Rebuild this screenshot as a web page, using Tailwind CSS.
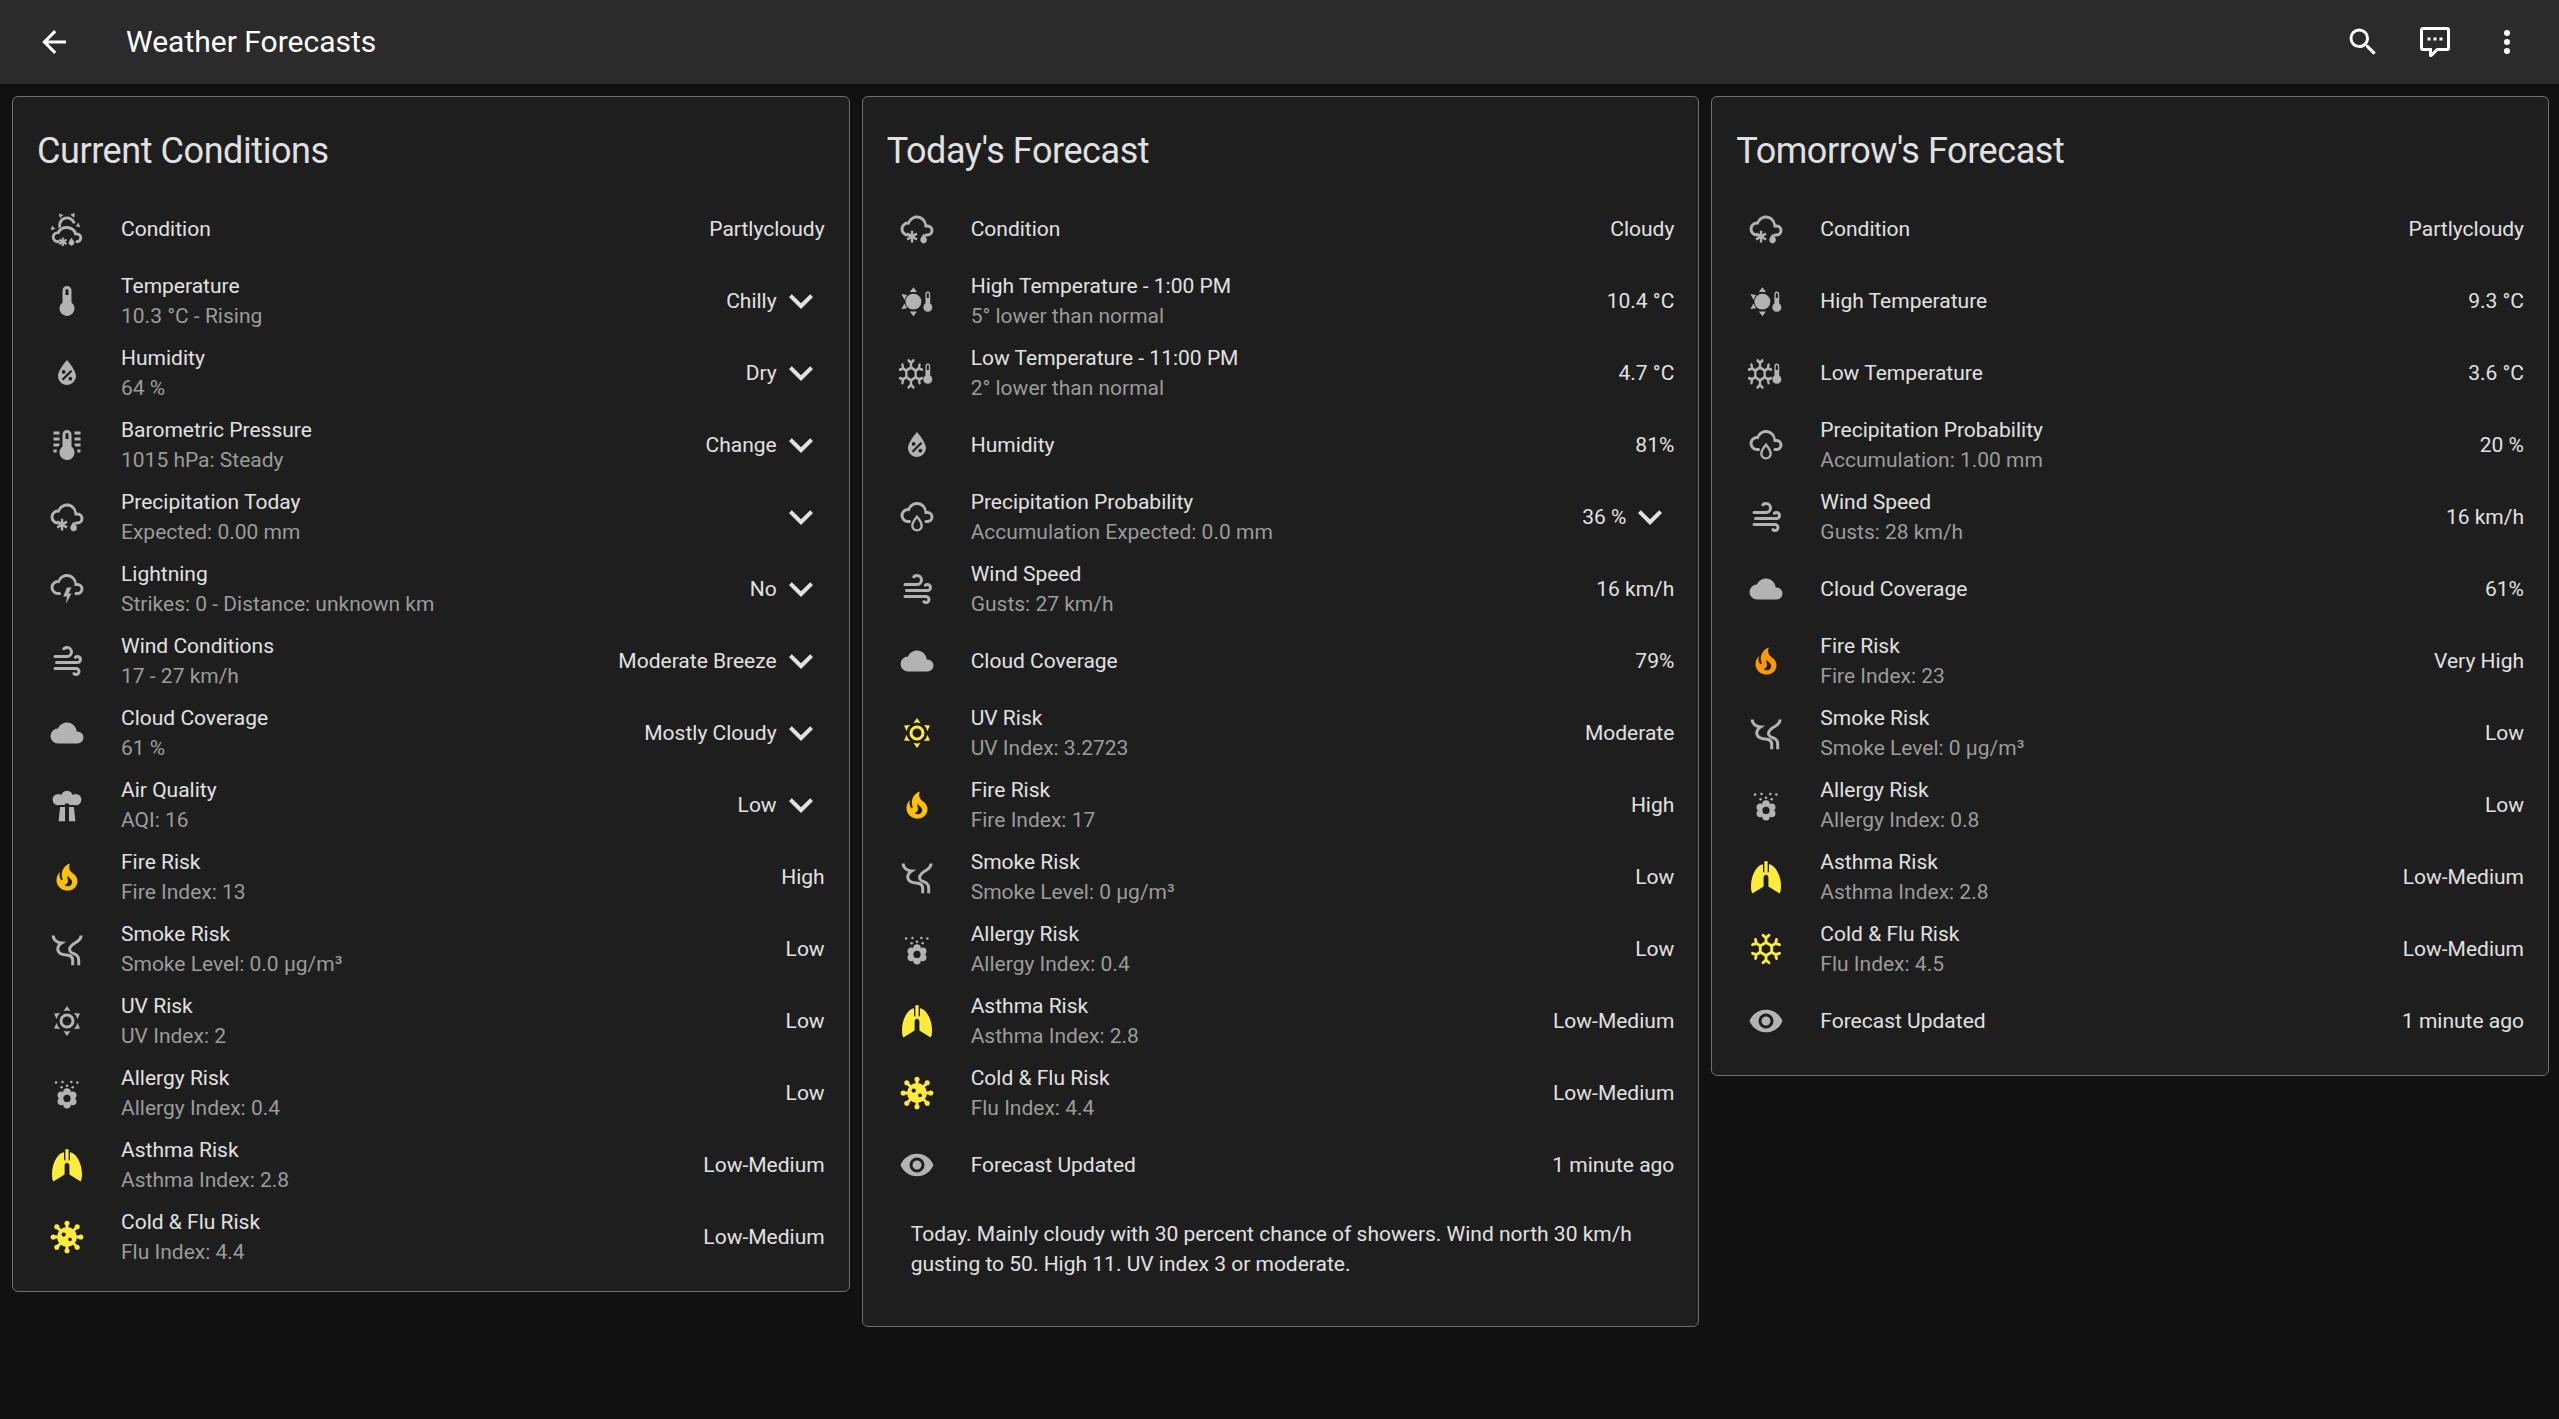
<!DOCTYPE html>
<html lang="en">
<head>
<meta charset="utf-8">
<title>Weather Forecasts</title>
<script src="https://cdn.jsdelivr.net/npm/@tailwindcss/browser@4"></script>
</head>
<body class="bg-[#111111] font-['Roboto',sans-serif] text-[21px] leading-[30px] text-[#e1e1e1]">
<svg class="absolute w-0 h-0" aria-hidden="true">
<defs>
<g id="cloud-line" fill="currentColor"><path d="M6,16A5,5 0 0,1 1,11A5,5 0 0,1 6,6C7,3.65 9.3,2 12,2C15.43,2 18.24,4.66 18.5,8.03L19,8A4,4 0 0,1 23,12A4,4 0 0,1 19,16H18A1,1 0 0,1 17,15A1,1 0 0,1 18,14H19A2,2 0 0,0 21,12A2,2 0 0,0 19,10H17V9A5,5 0 0,0 12,4C9.5,4 7.45,5.82 7.06,8.19C6.73,8.07 6.37,8 6,8A3,3 0 0,0 3,11A3,3 0 0,0 6,14H7A1,1 0 0,1 8,15A1,1 0 0,1 7,16H6Z"/></g>
<g id="snowy-rainy">
<use href="#cloud-line" transform="translate(0 1)"/>
<path fill="currentColor" d="M18.6,19.2C18.6,20.5 17.6,21.6 16.4,21.6C15.2,21.6 14.2,20.5 14.2,19.2C14.2,17.7 16.4,15.1 16.4,15.1C16.4,15.1 18.6,17.7 18.6,19.2Z"/>
<g stroke="currentColor" stroke-width="1.6" stroke-linecap="butt"><path d="M8.7 13.2V21M5.4 15.1L12 19M5.4 19L12 15.1"/></g>
</g>
<g id="partly-snowy-rainy">
<path fill="none" stroke="currentColor" stroke-width="1.9" d="M7.2 11A5 5 0 0 1 16.9 8.3"/>
<path fill="none" stroke="currentColor" stroke-width="1.9" stroke-linecap="round" d="M6.2 20.5C3.9 20.5 2.8 19 2.8 17.4C2.8 15.7 4.2 14.4 6.2 14.4C7.2 12.1 9.5 11 12 11C15 11 17.3 13 17.7 15.3C20 15.1 21.2 16.3 21.2 17.9C21.2 19.5 20 20.5 18.6 20.5"/>
<path fill="currentColor" d="M6.6 1.6L9.6 2.6L7.2 4.6ZM14.2 2.4L17.2 1.4L16.8 4.6ZM1.2 12.8L2 9.6L4.2 12ZM19.6 7.6L20.8 10.8L17.8 10.2Z"/>
<g stroke="currentColor" stroke-width="1.4"><path d="M9.2 17.6V23.4M6.7 19.1L11.7 22M6.7 22L11.7 19.1"/></g>
<path fill="currentColor" d="M16.9,21.2C16.9,22.2 16,23.1 15,23.1C14,23.1 13.1,22.2 13.1,21.2C13.1,20 15,17.8 15,17.8C15,17.8 16.9,20 16.9,21.2Z"/>
</g>
<path id="thermometer" fill="currentColor" d="M15 13V5A3 3 0 0 0 9 5V13A5 5 0 1 0 15 13M12 4A1 1 0 0 1 13 5V8H11V5A1 1 0 0 1 12 4Z"/>
<path id="water-percent" fill="currentColor" d="M12,3.25C12,3.25 6,10 6,14C6,17.32 8.69,20 12,20A6,6 0 0,0 18,14C18,10 12,3.25 12,3.25M14.47,9.97L15.53,11.03L9.53,17.03L8.47,15.97M9.75,10A1.25,1.25 0 0,1 11,11.25A1.25,1.25 0 0,1 9.75,12.5A1.25,1.25 0 0,1 8.5,11.25A1.25,1.25 0 0,1 9.75,10M14.25,14.5A1.25,1.25 0 0,1 15.5,15.75A1.25,1.25 0 0,1 14.25,17A1.25,1.25 0 0,1 13,15.75A1.25,1.25 0 0,1 14.25,14.5Z"/>
<path id="thermometer-lines" fill="currentColor" d="M17 3H21V5H17V3M17 7H21V9H17V7M17 11H21V13H17.75L17 12.1V11M21 15V17H19C19 16.31 18.9 15.63 18.71 15H21M7 3V5H3V3H7M7 7V9H3V7H7M7 11V12.1L6.25 13H3V11H7M3 15H5.29C5.1 15.63 5 16.31 5 17H3V15M15 13V5C15 3.34 13.66 2 12 2S9 3.34 9 5V13C6.79 14.66 6.34 17.79 8 20S12.79 22.66 15 21 17.66 16.21 16 14C15.72 13.62 15.38 13.28 15 13M12 4C12.55 4 13 4.45 13 5V8H11V5C11 4.45 11.45 4 12 4Z"/>
<path id="lightning" fill="currentColor" d="M6,16A5,5 0 0,1 1,11A5,5 0 0,1 6,6C7,3.65 9.3,2 12,2C15.43,2 18.24,4.66 18.5,8.03L19,8A4,4 0 0,1 23,12A4,4 0 0,1 19,16H18A1,1 0 0,1 17,15A1,1 0 0,1 18,14H19A2,2 0 0,0 21,12A2,2 0 0,0 19,10H17V9A5,5 0 0,0 12,4C9.5,4 7.45,5.82 7.06,8.19C6.73,8.07 6.37,8 6,8A3,3 0 0,0 3,11A3,3 0 0,0 6,14H7A1,1 0 0,1 8,15A1,1 0 0,1 7,16H6M12,11H15L13,15H15L11.25,22L12,17H9.5L12,11Z"/>
<path id="windy" fill="currentColor" d="M4,10A1,1 0 0,1 3,9A1,1 0 0,1 4,8H12A2,2 0 0,0 14,6A2,2 0 0,0 12,4C11.45,4 10.95,4.22 10.59,4.59C10.2,5 9.56,5 9.17,4.59C8.78,4.2 8.78,3.56 9.17,3.17C9.89,2.45 10.89,2 12,2A4,4 0 0,1 16,6A4,4 0 0,1 12,10H4M19,12A1,1 0 0,0 20,11A1,1 0 0,0 19,10C18.72,10 18.47,10.11 18.29,10.29C17.9,10.68 17.27,10.68 16.88,10.29C16.5,9.9 16.5,9.27 16.88,8.88C17.42,8.34 18.17,8 19,8A3,3 0 0,1 22,11A3,3 0 0,1 19,14H5A1,1 0 0,1 4,13A1,1 0 0,1 5,12H19M18,18H4A1,1 0 0,1 3,17A1,1 0 0,1 4,16H18A3,3 0 0,1 21,19A3,3 0 0,1 18,22C17.17,22 16.42,21.66 15.88,21.12C15.5,20.73 15.5,20.1 15.88,19.71C16.27,19.32 16.9,19.32 17.29,19.71C17.47,19.89 17.72,20 18,20A1,1 0 0,0 19,19A1,1 0 0,0 18,18Z"/>
<path id="cloudy" fill="currentColor" d="M6,19A5,5 0 0,1 1,14A5,5 0 0,1 6,9C7,6.65 9.3,5 12,5C15.43,5 18.24,7.66 18.5,11.03L19,11A4,4 0 0,1 23,15A4,4 0 0,1 19,19H6Z"/>
<g id="air" fill="currentColor">
<circle cx="12" cy="6.4" r="3.9"/><circle cx="6.2" cy="8.4" r="3.8"/><circle cx="17.8" cy="8.4" r="3.8"/>
<path d="M7 8H17V12H13.4V11H10.6V12H7Z"/>
<path d="M7.4 13.4H10.7V22.8H6.4ZM13.3 13.4H16.6L17.6 22.8H13.3Z"/>
</g>
<path id="fire" fill="currentColor" d="M17.66 11.2C17.43 10.9 17.15 10.64 16.89 10.38C16.22 9.78 15.46 9.35 14.82 8.72C13.33 7.26 13 4.85 13.95 3C13 3.23 12.17 3.75 11.46 4.32C8.87 6.4 7.85 10.07 9.07 13.22C9.11 13.32 9.15 13.42 9.15 13.55C9.15 13.77 9 13.97 8.8 14.05C8.57 14.15 8.33 14.09 8.14 13.93C8.08 13.88 8.04 13.83 8 13.76C6.87 12.33 6.69 10.28 7.45 8.64C5.78 10 4.87 12.3 5 14.47C5.06 14.97 5.12 15.47 5.29 15.97C5.43 16.57 5.7 17.17 6 17.7C7.08 19.43 8.95 20.67 10.96 20.92C13.1 21.19 15.39 20.8 17.03 19.32C18.86 17.66 19.5 15 18.56 12.72L18.43 12.46C18.22 12 17.66 11.2 17.66 11.2M14.5 17.5C14.22 17.74 13.76 18 13.4 18.1C12.28 18.5 11.16 17.94 10.5 17.28C11.69 17 12.4 16.12 12.61 15.23C12.78 14.43 12.46 13.77 12.33 13C12.21 12.26 12.23 11.63 12.5 10.94C12.69 11.32 12.89 11.7 13.13 12C13.9 13 15.11 13.44 15.37 14.8C15.41 14.94 15.43 15.08 15.43 15.23C15.46 16.05 15.1 16.95 14.5 17.5H14.5Z"/>
<g id="smoke" fill="none" stroke="currentColor" stroke-width="2">
<path d="M2.8 3C2.8 6 5.5 7.8 8.4 8C6 9.5 5 12 6.5 14C8 16.3 11 15.8 13.5 16.3C15 16.7 15.8 17.5 15.8 19.5V22.8"/>
<path d="M21.4 3C21.4 6 19 7 17 8.2C14.5 9.8 13 11.5 14 13.5C15 15 17 15 18.5 16.2C19.5 17 19.8 18 19.8 19.5V22.8"/>
</g>
<path id="sunny" fill="currentColor" d="M12,7A5,5 0 0,1 17,12A5,5 0 0,1 12,17A5,5 0 0,1 7,12A5,5 0 0,1 12,7M12,9A3,3 0 0,0 9,12A3,3 0 0,0 12,15A3,3 0 0,0 15,12A3,3 0 0,0 12,9M12,2L14.39,5.42C13.65,5.15 12.84,5 12,5C11.16,5 10.35,5.15 9.61,5.42L12,2M3.34,7L7.5,6.65C6.9,7.16 6.36,7.78 5.94,8.5C5.5,9.24 5.25,10 5.11,10.79L3.34,7M3.36,17L5.12,13.23C5.26,14 5.53,14.78 5.95,15.5C6.37,16.24 6.91,16.86 7.5,17.37L3.36,17M20.65,7L18.88,10.79C18.74,10 18.47,9.23 18.05,8.5C17.63,7.78 17.1,7.15 16.5,6.64L20.65,7M20.64,17L16.5,17.36C17.09,16.85 17.62,16.22 18.04,15.5C18.46,14.77 18.73,14 18.87,13.21L20.64,17M12,22.01L9.59,18.57C10.33,18.84 11.14,19 12,19C12.82,19 13.63,18.84 14.37,18.57L12,22.01Z"/>
<g id="pollen" fill="currentColor">
<circle cx="12" cy="11.4" r="2.5"/><circle cx="12" cy="19.8" r="2.5"/><circle cx="8.2" cy="13.5" r="2.5"/><circle cx="15.8" cy="13.5" r="2.5"/><circle cx="8.2" cy="17.7" r="2.5"/><circle cx="15.8" cy="17.7" r="2.5"/>
<circle cx="12" cy="15.6" r="4"/>
<circle cx="12" cy="15.6" r="2.4" fill="#1e1e1e"/>
<circle cx="4.7" cy="5" r=".85"/><circle cx="9" cy="4.7" r=".85"/><circle cx="14.9" cy="4.7" r=".85"/><circle cx="18.9" cy="5" r=".85"/><circle cx="8.4" cy="8.2" r=".85"/><circle cx="12" cy="7.2" r=".85"/><circle cx="15.8" cy="8.2" r=".85"/>
</g>
<g id="lungs" fill="currentColor">
<path d="M10 3.5C7 3.5 2 9.5 2 18C2 20 2.2 22 2.9 23L10.4 18.4V11.8L11.8 10V9.5L10 8.6Z"/>
<path d="M14 3.5C17 3.5 22 9.5 22 18C22 20 21.8 22 21.1 23L13.6 18.4V11.8L12.2 10V9.5L14 8.6Z"/>
<rect x="10.9" y="1.5" width="2.2" height="9"/>
</g>
<g id="virus" fill="currentColor">
<g stroke="currentColor" stroke-width="1.9" stroke-linecap="round">
<path d="M12 12V3M12 12L18.4 5.6M12 12H21M12 12L18.4 18.4M12 12V21M12 12L5.6 18.4M12 12H3M12 12L5.6 5.6"/>
</g>
<circle cx="12" cy="2.8" r="1.7"/><circle cx="18.8" cy="5.2" r="1.7"/><circle cx="21.2" cy="12" r="1.7"/><circle cx="18.8" cy="18.8" r="1.7"/><circle cx="12" cy="21.2" r="1.7"/><circle cx="5.2" cy="18.8" r="1.7"/><circle cx="2.8" cy="12" r="1.7"/><circle cx="5.2" cy="5.2" r="1.7"/>
<circle cx="12" cy="12" r="6.6"/>
<circle cx="9.8" cy="10.4" r="1.4" fill="#1e1e1e"/><circle cx="14" cy="13.6" r="1.2" fill="#1e1e1e"/>
</g>
<g id="snow-arm" fill="none" stroke="currentColor" stroke-width="1.9" stroke-linecap="round"><path d="M12 7.6V4.4M12 4.6L10 2.8M12 4.6L14 2.8"/></g>
<g id="snowflake">
<path fill="none" stroke="currentColor" stroke-width="1.9" d="M12 7.6L15.8 9.8V14.2L12 16.4L8.2 14.2V9.8Z"/>
<use href="#snow-arm"/><use href="#snow-arm" transform="rotate(60 12 12)"/><use href="#snow-arm" transform="rotate(120 12 12)"/><use href="#snow-arm" transform="rotate(180 12 12)"/><use href="#snow-arm" transform="rotate(240 12 12)"/><use href="#snow-arm" transform="rotate(300 12 12)"/>
</g>
<path id="mini-therm" fill="currentColor" fill-rule="evenodd" d="M20.8 13.7V7.3A1.6 1.6 0 0 0 17.6 7.3V13.7A3 3 0 1 0 20.8 13.7ZM19.2 6.6A.7 .7 0 0 1 19.9 7.3V10H18.5V7.3A.7 .7 0 0 1 19.2 6.6Z"/>
<g id="sun-therm">
<circle cx="9.6" cy="12.4" r="5.3" fill="currentColor"/>
<path fill="currentColor" d="M9.6 2.8L12 6H7.2ZM9.6 22.2L7.2 19H12ZM1.6 7.4L5.4 8L3.6 11.2ZM1.6 17.4L3.6 13.6L5.4 16.8Z"/>
<use href="#mini-therm"/>
</g>
<g id="snow-therm">
<use href="#snowflake" transform="translate(8 12.6) scale(.82 .98) translate(-12 -12)"/>
<use href="#mini-therm"/>
</g>
<g id="rain-prob">
<use href="#cloud-line"/>
<path fill="none" stroke="currentColor" stroke-width="1.6" d="M12 11.8C12 11.8 8.9 15.4 8.9 17.8A3.1 3.1 0 0 0 15.1 17.8C15.1 15.4 12 11.8 12 11.8Z"/>
</g>
<path id="eye" fill="currentColor" d="M12,9A3,3 0 0,0 9,12A3,3 0 0,0 12,15A3,3 0 0,0 15,12A3,3 0 0,0 12,9M12,17A5,5 0 0,1 7,12A5,5 0 0,1 12,7A5,5 0 0,1 17,12A5,5 0 0,1 12,17M12,4.5C7,4.5 2.73,7.61 1,12C2.73,16.39 7,19.5 12,19.5C17,19.5 21.27,16.39 23,12C21.27,7.61 17,4.5 12,4.5Z"/>
<path id="chev" fill="currentColor" d="M7.41,8.58L12,13.17L16.59,8.58L18,10L12,16L6,10L7.41,8.58Z"/>
</defs>
</svg>

<header class="h-[84px] bg-[#2b2b2b] flex items-center pl-[18px] pr-4 text-white">
<button class="w-[72px] h-[72px] flex items-center justify-center"><svg viewBox="0 0 24 24" class="w-9 h-9 fill-current"><path d="M20,11V13H8L13.5,18.5L12.08,19.92L4.16,12L12.08,4.08L13.5,5.5L8,11H20Z"/></svg></button>
<h1 class="ml-[36px] flex-1 text-[30px] leading-[40px] font-normal">Weather Forecasts</h1>
<button class="w-[72px] h-[72px] flex items-center justify-center"><svg viewBox="0 0 24 24" class="w-9 h-9 fill-current"><path d="M9.5,3A6.5,6.5 0 0,1 16,9.5C16,11.11 15.41,12.59 14.44,13.73L14.71,14H15.5L20.5,19L19,20.5L14,15.5V14.71L13.73,14.44C12.59,15.41 11.11,16 9.5,16A6.5,6.5 0 0,1 3,9.5A6.5,6.5 0 0,1 9.5,3M9.5,5C7,5 5,7 5,9.5C5,12 7,14 9.5,14C12,14 14,12 14,9.5C14,7 12,5 9.5,5Z"/></svg></button>
<button class="w-[72px] h-[72px] flex items-center justify-center"><svg viewBox="0 0 24 24" class="w-9 h-9 fill-current"><path d="M9,22A1,1 0 0,1 8,21V18H4A2,2 0 0,1 2,16V4C2,2.89 2.9,2 4,2H20A2,2 0 0,1 22,4V16A2,2 0 0,1 20,18H13.9L10.2,21.71C10,21.9 9.75,22 9.5,22V22H9M10,16V19.08L13.08,16H20V4H4V16H10M17,11H15V9H17V11M13,11H11V9H13V11M9,11H7V9H9V11Z"/></svg></button>
<button class="w-[72px] h-[72px] flex items-center justify-center"><svg viewBox="0 0 24 24" class="w-9 h-9 fill-current"><path d="M12,16A2,2 0 0,1 14,18A2,2 0 0,1 12,20A2,2 0 0,1 10,18A2,2 0 0,1 12,16M12,10A2,2 0 0,1 14,12A2,2 0 0,1 12,14A2,2 0 0,1 10,12A2,2 0 0,1 12,10M12,4A2,2 0 0,1 14,6A2,2 0 0,1 12,8A2,2 0 0,1 10,6A2,2 0 0,1 12,4Z"/></svg></button>
</header>

<main class="grid grid-cols-3 gap-3 items-start pl-3 pr-[10px] pt-3 h-[1335px]">

<!-- Current -->
<section class="bg-[#1e1e1e] border border-[#6f6f6f] rounded-md px-6 pb-[18px]">
<h2 class="text-[36px] leading-[48px] tracking-[-0.012em] font-normal pt-[30px] pb-[18px]">Current Conditions</h2>
<div class="flex items-center h-[72px]"><span class="w-[60px] flex justify-center"><svg viewBox="0 0 24 24" class="w-9 h-9 text-[#b3b3b3]"><use href="#partly-snowy-rainy"/></svg></span><div class="ml-6 flex-1">Condition</div><div>Partlycloudy</div></div>
<div class="flex items-center h-[72px]"><span class="w-[60px] flex justify-center"><svg viewBox="0 0 24 24" class="w-9 h-9 text-[#b3b3b3]"><use href="#thermometer"/></svg></span><div class="ml-6 flex-1"><div>Temperature</div><div class="text-[#9b9b9b]">10.3 °C - Rising</div></div><div>Chilly</div><svg viewBox="0 0 24 24" class="w-12 h-12 text-[#e1e1e1]"><use href="#chev"/></svg></div>
<div class="flex items-center h-[72px]"><span class="w-[60px] flex justify-center"><svg viewBox="0 0 24 24" class="w-9 h-9 text-[#b3b3b3]"><use href="#water-percent"/></svg></span><div class="ml-6 flex-1"><div>Humidity</div><div class="text-[#9b9b9b]">64 %</div></div><div>Dry</div><svg viewBox="0 0 24 24" class="w-12 h-12 text-[#e1e1e1]"><use href="#chev"/></svg></div>
<div class="flex items-center h-[72px]"><span class="w-[60px] flex justify-center"><svg viewBox="0 0 24 24" class="w-9 h-9 text-[#b3b3b3]"><use href="#thermometer-lines"/></svg></span><div class="ml-6 flex-1"><div>Barometric Pressure</div><div class="text-[#9b9b9b]">1015 hPa: Steady</div></div><div>Change</div><svg viewBox="0 0 24 24" class="w-12 h-12 text-[#e1e1e1]"><use href="#chev"/></svg></div>
<div class="flex items-center h-[72px]"><span class="w-[60px] flex justify-center"><svg viewBox="0 0 24 24" class="w-9 h-9 text-[#b3b3b3]"><use href="#snowy-rainy"/></svg></span><div class="ml-6 flex-1"><div>Precipitation Today</div><div class="text-[#9b9b9b]">Expected: 0.00 mm</div></div><svg viewBox="0 0 24 24" class="w-12 h-12 text-[#e1e1e1]"><use href="#chev"/></svg></div>
<div class="flex items-center h-[72px]"><span class="w-[60px] flex justify-center"><svg viewBox="0 0 24 24" class="w-9 h-9 text-[#b3b3b3]"><use href="#lightning"/></svg></span><div class="ml-6 flex-1"><div>Lightning</div><div class="text-[#9b9b9b]">Strikes: 0 - Distance: unknown km</div></div><div>No</div><svg viewBox="0 0 24 24" class="w-12 h-12 text-[#e1e1e1]"><use href="#chev"/></svg></div>
<div class="flex items-center h-[72px]"><span class="w-[60px] flex justify-center"><svg viewBox="0 0 24 24" class="w-9 h-9 text-[#b3b3b3]"><use href="#windy"/></svg></span><div class="ml-6 flex-1"><div>Wind Conditions</div><div class="text-[#9b9b9b]">17 - 27 km/h</div></div><div>Moderate Breeze</div><svg viewBox="0 0 24 24" class="w-12 h-12 text-[#e1e1e1]"><use href="#chev"/></svg></div>
<div class="flex items-center h-[72px]"><span class="w-[60px] flex justify-center"><svg viewBox="0 0 24 24" class="w-9 h-9 text-[#b3b3b3]"><use href="#cloudy"/></svg></span><div class="ml-6 flex-1"><div>Cloud Coverage</div><div class="text-[#9b9b9b]">61 %</div></div><div>Mostly Cloudy</div><svg viewBox="0 0 24 24" class="w-12 h-12 text-[#e1e1e1]"><use href="#chev"/></svg></div>
<div class="flex items-center h-[72px]"><span class="w-[60px] flex justify-center"><svg viewBox="0 0 24 24" class="w-9 h-9 text-[#b3b3b3]"><use href="#air"/></svg></span><div class="ml-6 flex-1"><div>Air Quality</div><div class="text-[#9b9b9b]">AQI: 16</div></div><div>Low</div><svg viewBox="0 0 24 24" class="w-12 h-12 text-[#e1e1e1]"><use href="#chev"/></svg></div>
<div class="flex items-center h-[72px]"><span class="w-[60px] flex justify-center"><svg viewBox="0 0 24 24" class="w-9 h-9 text-[#ffc107]"><use href="#fire"/></svg></span><div class="ml-6 flex-1"><div>Fire Risk</div><div class="text-[#9b9b9b]">Fire Index: 13</div></div><div>High</div></div>
<div class="flex items-center h-[72px]"><span class="w-[60px] flex justify-center"><svg viewBox="0 0 24 24" class="w-9 h-9 text-[#b3b3b3]"><use href="#smoke"/></svg></span><div class="ml-6 flex-1"><div>Smoke Risk</div><div class="text-[#9b9b9b]">Smoke Level: 0.0 µg/m³</div></div><div>Low</div></div>
<div class="flex items-center h-[72px]"><span class="w-[60px] flex justify-center"><svg viewBox="0 0 24 24" class="w-9 h-9 text-[#b3b3b3]"><use href="#sunny"/></svg></span><div class="ml-6 flex-1"><div>UV Risk</div><div class="text-[#9b9b9b]">UV Index: 2</div></div><div>Low</div></div>
<div class="flex items-center h-[72px]"><span class="w-[60px] flex justify-center"><svg viewBox="0 0 24 24" class="w-9 h-9 text-[#b3b3b3]"><use href="#pollen"/></svg></span><div class="ml-6 flex-1"><div>Allergy Risk</div><div class="text-[#9b9b9b]">Allergy Index: 0.4</div></div><div>Low</div></div>
<div class="flex items-center h-[72px]"><span class="w-[60px] flex justify-center"><svg viewBox="0 0 24 24" class="w-9 h-9 text-[#ffeb3b]"><use href="#lungs"/></svg></span><div class="ml-6 flex-1"><div>Asthma Risk</div><div class="text-[#9b9b9b]">Asthma Index: 2.8</div></div><div>Low-Medium</div></div>
<div class="flex items-center h-[72px]"><span class="w-[60px] flex justify-center"><svg viewBox="0 0 24 24" class="w-9 h-9 text-[#ffeb3b]"><use href="#virus"/></svg></span><div class="ml-6 flex-1"><div>Cold &amp; Flu Risk</div><div class="text-[#9b9b9b]">Flu Index: 4.4</div></div><div>Low-Medium</div></div>
</section>

<!-- Today -->
<section class="bg-[#1e1e1e] border border-[#6f6f6f] rounded-md px-6 pb-[47px]">
<h2 class="text-[36px] leading-[48px] tracking-[-0.012em] font-normal pt-[30px] pb-[18px]">Today's Forecast</h2>
<div class="flex items-center h-[72px]"><span class="w-[60px] flex justify-center"><svg viewBox="0 0 24 24" class="w-9 h-9 text-[#b3b3b3]"><use href="#snowy-rainy"/></svg></span><div class="ml-6 flex-1">Condition</div><div>Cloudy</div></div>
<div class="flex items-center h-[72px]"><span class="w-[60px] flex justify-center"><svg viewBox="0 0 24 24" class="w-9 h-9 text-[#b3b3b3]"><use href="#sun-therm"/></svg></span><div class="ml-6 flex-1"><div>High Temperature - 1:00 PM</div><div class="text-[#9b9b9b]">5° lower than normal</div></div><div>10.4 °C</div></div>
<div class="flex items-center h-[72px]"><span class="w-[60px] flex justify-center"><svg viewBox="0 0 24 24" class="w-9 h-9 text-[#b3b3b3]"><use href="#snow-therm"/></svg></span><div class="ml-6 flex-1"><div>Low Temperature - 11:00 PM</div><div class="text-[#9b9b9b]">2° lower than normal</div></div><div>4.7 °C</div></div>
<div class="flex items-center h-[72px]"><span class="w-[60px] flex justify-center"><svg viewBox="0 0 24 24" class="w-9 h-9 text-[#b3b3b3]"><use href="#water-percent"/></svg></span><div class="ml-6 flex-1">Humidity</div><div>81%</div></div>
<div class="flex items-center h-[72px]"><span class="w-[60px] flex justify-center"><svg viewBox="0 0 24 24" class="w-9 h-9 text-[#b3b3b3]"><use href="#rain-prob"/></svg></span><div class="ml-6 flex-1"><div>Precipitation Probability</div><div class="text-[#9b9b9b]">Accumulation Expected: 0.0 mm</div></div><div>36 %</div><svg viewBox="0 0 24 24" class="w-12 h-12 text-[#e1e1e1]"><use href="#chev"/></svg></div>
<div class="flex items-center h-[72px]"><span class="w-[60px] flex justify-center"><svg viewBox="0 0 24 24" class="w-9 h-9 text-[#b3b3b3]"><use href="#windy"/></svg></span><div class="ml-6 flex-1"><div>Wind Speed</div><div class="text-[#9b9b9b]">Gusts: 27 km/h</div></div><div>16 km/h</div></div>
<div class="flex items-center h-[72px]"><span class="w-[60px] flex justify-center"><svg viewBox="0 0 24 24" class="w-9 h-9 text-[#b3b3b3]"><use href="#cloudy"/></svg></span><div class="ml-6 flex-1">Cloud Coverage</div><div>79%</div></div>
<div class="flex items-center h-[72px]"><span class="w-[60px] flex justify-center"><svg viewBox="0 0 24 24" class="w-9 h-9 text-[#ffeb3b]"><use href="#sunny"/></svg></span><div class="ml-6 flex-1"><div>UV Risk</div><div class="text-[#9b9b9b]">UV Index: 3.2723</div></div><div>Moderate</div></div>
<div class="flex items-center h-[72px]"><span class="w-[60px] flex justify-center"><svg viewBox="0 0 24 24" class="w-9 h-9 text-[#ffc107]"><use href="#fire"/></svg></span><div class="ml-6 flex-1"><div>Fire Risk</div><div class="text-[#9b9b9b]">Fire Index: 17</div></div><div>High</div></div>
<div class="flex items-center h-[72px]"><span class="w-[60px] flex justify-center"><svg viewBox="0 0 24 24" class="w-9 h-9 text-[#b3b3b3]"><use href="#smoke"/></svg></span><div class="ml-6 flex-1"><div>Smoke Risk</div><div class="text-[#9b9b9b]">Smoke Level: 0 µg/m³</div></div><div>Low</div></div>
<div class="flex items-center h-[72px]"><span class="w-[60px] flex justify-center"><svg viewBox="0 0 24 24" class="w-9 h-9 text-[#b3b3b3]"><use href="#pollen"/></svg></span><div class="ml-6 flex-1"><div>Allergy Risk</div><div class="text-[#9b9b9b]">Allergy Index: 0.4</div></div><div>Low</div></div>
<div class="flex items-center h-[72px]"><span class="w-[60px] flex justify-center"><svg viewBox="0 0 24 24" class="w-9 h-9 text-[#ffeb3b]"><use href="#lungs"/></svg></span><div class="ml-6 flex-1"><div>Asthma Risk</div><div class="text-[#9b9b9b]">Asthma Index: 2.8</div></div><div>Low-Medium</div></div>
<div class="flex items-center h-[72px]"><span class="w-[60px] flex justify-center"><svg viewBox="0 0 24 24" class="w-9 h-9 text-[#ffeb3b]"><use href="#virus"/></svg></span><div class="ml-6 flex-1"><div>Cold &amp; Flu Risk</div><div class="text-[#9b9b9b]">Flu Index: 4.4</div></div><div>Low-Medium</div></div>
<div class="flex items-center h-[72px]"><span class="w-[60px] flex justify-center"><svg viewBox="0 0 24 24" class="w-9 h-9 text-[#b3b3b3]"><use href="#eye"/></svg></span><div class="ml-6 flex-1">Forecast Updated</div><div>1 minute ago</div></div>
<p class="px-6 pt-[18px]">Today. Mainly cloudy with 30 percent chance of showers. Wind north 30 km/h gusting to 50. High 11. UV index 3 or moderate.</p>
</section>

<!-- Tomorrow -->
<section class="bg-[#1e1e1e] border border-[#6f6f6f] rounded-md px-6 pb-[18px]">
<h2 class="text-[36px] leading-[48px] tracking-[-0.012em] font-normal pt-[30px] pb-[18px]">Tomorrow's Forecast</h2>
<div class="flex items-center h-[72px]"><span class="w-[60px] flex justify-center"><svg viewBox="0 0 24 24" class="w-9 h-9 text-[#b3b3b3]"><use href="#snowy-rainy"/></svg></span><div class="ml-6 flex-1">Condition</div><div>Partlycloudy</div></div>
<div class="flex items-center h-[72px]"><span class="w-[60px] flex justify-center"><svg viewBox="0 0 24 24" class="w-9 h-9 text-[#b3b3b3]"><use href="#sun-therm"/></svg></span><div class="ml-6 flex-1">High Temperature</div><div>9.3 °C</div></div>
<div class="flex items-center h-[72px]"><span class="w-[60px] flex justify-center"><svg viewBox="0 0 24 24" class="w-9 h-9 text-[#b3b3b3]"><use href="#snow-therm"/></svg></span><div class="ml-6 flex-1">Low Temperature</div><div>3.6 °C</div></div>
<div class="flex items-center h-[72px]"><span class="w-[60px] flex justify-center"><svg viewBox="0 0 24 24" class="w-9 h-9 text-[#b3b3b3]"><use href="#rain-prob"/></svg></span><div class="ml-6 flex-1"><div>Precipitation Probability</div><div class="text-[#9b9b9b]">Accumulation: 1.00 mm</div></div><div>20 %</div></div>
<div class="flex items-center h-[72px]"><span class="w-[60px] flex justify-center"><svg viewBox="0 0 24 24" class="w-9 h-9 text-[#b3b3b3]"><use href="#windy"/></svg></span><div class="ml-6 flex-1"><div>Wind Speed</div><div class="text-[#9b9b9b]">Gusts: 28 km/h</div></div><div>16 km/h</div></div>
<div class="flex items-center h-[72px]"><span class="w-[60px] flex justify-center"><svg viewBox="0 0 24 24" class="w-9 h-9 text-[#b3b3b3]"><use href="#cloudy"/></svg></span><div class="ml-6 flex-1">Cloud Coverage</div><div>61%</div></div>
<div class="flex items-center h-[72px]"><span class="w-[60px] flex justify-center"><svg viewBox="0 0 24 24" class="w-9 h-9 text-[#ff9800]"><use href="#fire"/></svg></span><div class="ml-6 flex-1"><div>Fire Risk</div><div class="text-[#9b9b9b]">Fire Index: 23</div></div><div>Very High</div></div>
<div class="flex items-center h-[72px]"><span class="w-[60px] flex justify-center"><svg viewBox="0 0 24 24" class="w-9 h-9 text-[#b3b3b3]"><use href="#smoke"/></svg></span><div class="ml-6 flex-1"><div>Smoke Risk</div><div class="text-[#9b9b9b]">Smoke Level: 0 µg/m³</div></div><div>Low</div></div>
<div class="flex items-center h-[72px]"><span class="w-[60px] flex justify-center"><svg viewBox="0 0 24 24" class="w-9 h-9 text-[#b3b3b3]"><use href="#pollen"/></svg></span><div class="ml-6 flex-1"><div>Allergy Risk</div><div class="text-[#9b9b9b]">Allergy Index: 0.8</div></div><div>Low</div></div>
<div class="flex items-center h-[72px]"><span class="w-[60px] flex justify-center"><svg viewBox="0 0 24 24" class="w-9 h-9 text-[#ffeb3b]"><use href="#lungs"/></svg></span><div class="ml-6 flex-1"><div>Asthma Risk</div><div class="text-[#9b9b9b]">Asthma Index: 2.8</div></div><div>Low-Medium</div></div>
<div class="flex items-center h-[72px]"><span class="w-[60px] flex justify-center"><svg viewBox="0 0 24 24" class="w-9 h-9 text-[#ffeb3b]"><use href="#snowflake"/></svg></span><div class="ml-6 flex-1"><div>Cold &amp; Flu Risk</div><div class="text-[#9b9b9b]">Flu Index: 4.5</div></div><div>Low-Medium</div></div>
<div class="flex items-center h-[72px]"><span class="w-[60px] flex justify-center"><svg viewBox="0 0 24 24" class="w-9 h-9 text-[#b3b3b3]"><use href="#eye"/></svg></span><div class="ml-6 flex-1">Forecast Updated</div><div>1 minute ago</div></div>
</section>
</main>
</body>
</html>
